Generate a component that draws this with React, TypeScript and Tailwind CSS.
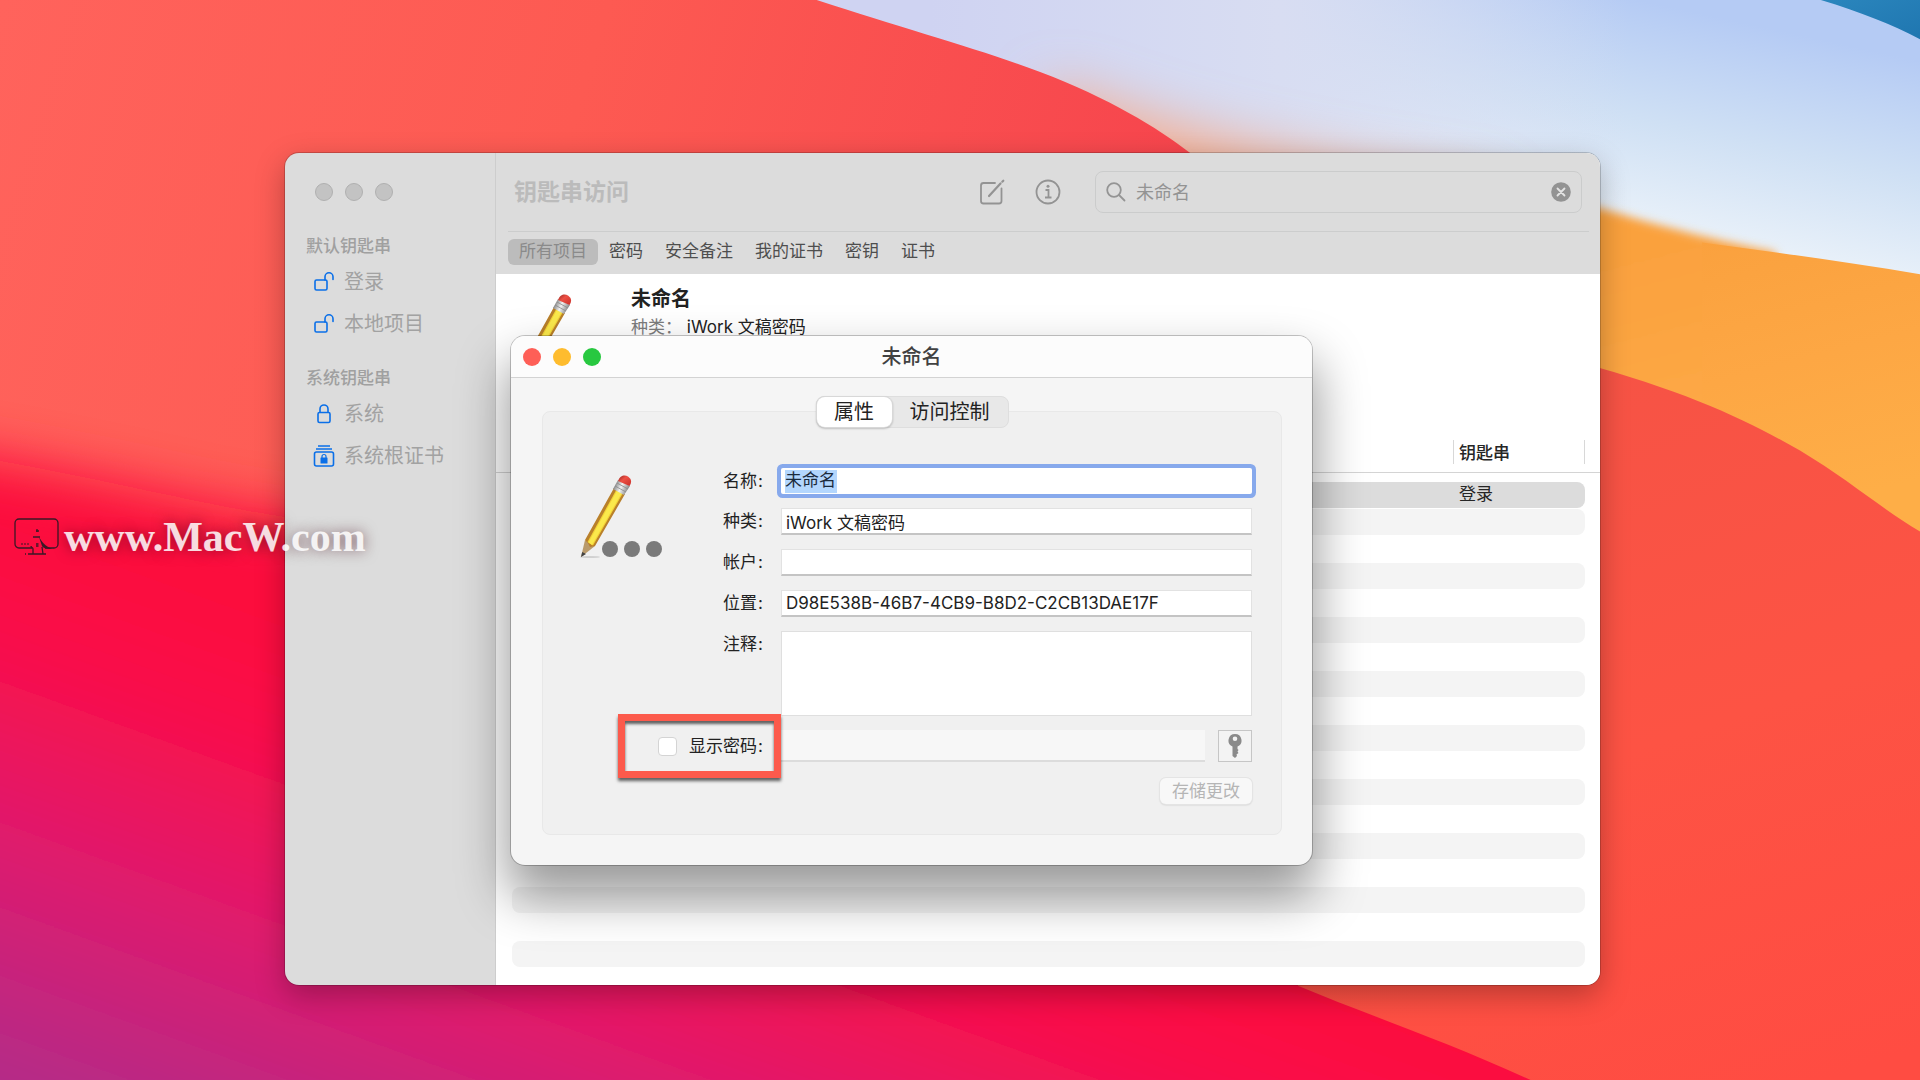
import React from "react";

function Wallpaper() {
  return (
    <svg
      aria-hidden="true"
      className="absolute inset-0 h-full w-full"
      viewBox="0 0 1568 882"
      preserveAspectRatio="none"
    >
      <defs>
        <linearGradient id="sky" gradientUnits="userSpaceOnUse" x1="1430" y1="20" x2="1390" y2="205">
          <stop offset="0" stopColor="#b5cbf4" />
          <stop offset="0.5" stopColor="#cfe0f4" />
          <stop offset="1" stopColor="#ecf3fa" />
        </linearGradient>
        <linearGradient id="lilac" gradientUnits="userSpaceOnUse" x1="760" y1="0" x2="1330" y2="0">
          <stop offset="0" stopColor="#cfd3f2" />
          <stop offset="0.5" stopColor="#d8ddf2" />
          <stop offset="1" stopColor="#d8ddf2" stopOpacity="0" />
        </linearGradient>
        <linearGradient id="orange" gradientUnits="userSpaceOnUse" x1="1400" y1="190" x2="1460" y2="420">
          <stop offset="0" stopColor="#faa13e" />
          <stop offset="0.5" stopColor="#fda744" />
          <stop offset="1" stopColor="#feae47" />
        </linearGradient>
        <linearGradient id="coral" x1="0" y1="0" x2="1" y2="0.25">
          <stop offset="0" stopColor="#ff635c" />
          <stop offset="0.45" stopColor="#fd5a52" />
          <stop offset="1" stopColor="#f5414c" />
        </linearGradient>
        <linearGradient id="right" gradientUnits="userSpaceOnUse" x1="1300" y1="300" x2="1500" y2="880">
          <stop offset="0" stopColor="#f65345" />
          <stop offset="0.5" stopColor="#fd5344" />
          <stop offset="1" stopColor="#ff4c42" />
        </linearGradient>
        <linearGradient id="crimson" gradientUnits="userSpaceOnUse" x1="0" y1="430" x2="-145" y2="830">
          <stop offset="0" stopColor="#fc0c3e" />
          <stop offset="0.2" stopColor="#f90f4a" />
          <stop offset="0.55" stopColor="#e01a6c" />
          <stop offset="1" stopColor="#b32c88" />
        </linearGradient>
        <linearGradient id="corner" x1="0" y1="0" x2="1" y2="1">
          <stop offset="0" stopColor="#2b86bd" />
          <stop offset="1" stopColor="#1f76b0" />
        </linearGradient>
        <filter id="soft" filterUnits="userSpaceOnUse" x="-400" y="-200" width="2400" height="1500">
          <feGaussianBlur stdDeviation="22" />
        </filter>
        <filter id="mid" filterUnits="userSpaceOnUse" x="1100" y="100" width="700" height="500">
          <feGaussianBlur stdDeviation="4" />
        </filter>
        <clipPath id="coralClip">
          <path d="M-60 -60H560L667 0C740 24 800 40 850 59C905 80 945 104 972 125L1040 170V960H-60Z" />
        </clipPath>
      </defs>
      <rect width="1568" height="882" fill="url(#sky)" />
      <rect width="1568" height="200" fill="url(#lilac)" />
      <path d="M860 70C940 100 1030 130 1220 155V220H800Z" fill="#f7ab8a" filter="url(#soft)" />
      <path d="M1487 0C1520 10 1545 20 1568 32V0Z" fill="url(#corner)" />
      <path d="M1200 145L1307 170C1340 180 1390 194 1450 206V420H1200Z" fill="url(#orange)" filter="url(#mid)" />
      <path d="M1390 198C1450 206 1510 214 1568 224V480H1390Z" fill="url(#orange)" />
      <g clipPath="url(#coralClip)">
        <rect width="1040" height="882" fill="url(#coral)" />
      </g>
      <path
        d="M-200 350C40 370 160 420 300 430H1400V1100H-200Z"
        fill="url(#crimson)"
        filter="url(#soft)"
      />
      <path
        d="M1290 296C1380 320 1430 345 1470 368C1510 392 1540 418 1568 434V882H1250C1180 850 1120 830 1060 805V600H1290Z"
        fill="url(#right)"
      />
    </svg>
  );
}

function Pencil({ className }: { className: string }) {
  return (
    <svg aria-hidden="true" className={className} viewBox="0 0 54 84">
      <defs>
        <linearGradient id="ferrule" x1="0" y1="0.2" x2="1" y2="0.6">
          <stop offset="0" stopColor="#5f5f5f" />
          <stop offset="0.5" stopColor="#f2f2f2" />
          <stop offset="1" stopColor="#777" />
        </linearGradient>
        <linearGradient id="eraser" x1="0" y1="0" x2="1" y2="1">
          <stop offset="0" stopColor="#8f2420" />
          <stop offset="0.4" stopColor="#ee5044" />
          <stop offset="1" stopColor="#c8302a" />
        </linearGradient>
      </defs>
      <ellipse cx="10" cy="82" rx="10" ry="1" fill="#0002" />
      <path d="M1 82L5 65L15 71Z" fill="#b99a6b" />
      <path d="M1 82L2.200 77L6 79Z" fill="#444" />
      <path d="M5 65L34 13L45 19L15 71L10 72L8 68Z" fill="#b9802a" />
      <path d="M7.500 67L36.500 14.500L43 18L13 70.500Z" fill="#f3d236" />
      <path d="M8.500 67.500L37.500 15L42 17.500L12 70Z" fill="#fbe94c" />
      <path d="M33 14L38 5L50 11L44 20Z" fill="url(#ferrule)" />
      <path d="M35 11L46 17M37 8L48 14" stroke="#8a8a8a" strokeWidth="0.8" />
      <path d="M38 6C40 0 45 -0.500 48 1.500C51.500 4 52 7 49.500 11Z" fill="url(#eraser)" />
    </svg>
  );
}

function UnlockIcon() {
  return (
    <svg aria-hidden="true" className="h-5 w-5" viewBox="0 0 20 20" fill="none" stroke="#0a6fe8" strokeWidth="1.6">
      <rect x="1" y="8" width="12" height="10" rx="1.500" />
      <path d="M11 8V4.800a4 4 0 0 1 8 0V7.500" strokeLinecap="round" />
    </svg>
  );
}

function LockIcon() {
  return (
    <svg aria-hidden="true" className="h-5 w-5" viewBox="0 0 20 20" fill="none" stroke="#0a6fe8" strokeWidth="1.6">
      <rect x="4" y="8.500" width="12" height="10" rx="1.500" />
      <path d="M6 8.500V5a4 4 0 0 1 8 0V8.500" />
    </svg>
  );
}

function RootCertIcon() {
  return (
    <svg aria-hidden="true" className="h-6 w-5 overflow-visible" viewBox="0 0 20 24" fill="none" stroke="#0a6fe8" strokeWidth="1.6">
      <path d="M4 2H16M2 5H18" strokeWidth="1.3" />
      <rect x="0.500" y="8" width="19" height="14" rx="2" />
      <rect x="6.500" y="13.500" width="7" height="6" fill="#0a6fe8" stroke="none" rx="0.500" />
      <path d="M8 14v-1.500a2 2 0 0 1 4 0v1.500" strokeWidth="1.200" />
    </svg>
  );
}

const sections = [
  {
    title: "默认钥匙串",
    items: [
      { label: "登录", icon: <UnlockIcon /> },
      { label: "本地项目", icon: <UnlockIcon /> },
    ],
  },
  {
    title: "系统钥匙串",
    items: [
      { label: "系统", icon: <LockIcon /> },
      { label: "系统根证书", icon: <RootCertIcon /> },
    ],
  },
];

function Sidebar() {
  return (
    <aside className="w-[211px] shrink-0 border-r border-[#cdcdcd] pt-[30px] pl-[21px]">
      <div className="flex gap-3 pl-[9px]">
        {[0, 1, 2].map((n) => (
          <span key={n} className="size-[18px] rounded-full border border-[#b0b0b0] bg-[#c3c3c3]" />
        ))}
      </div>
      <nav className="mt-[33px] flex flex-col gap-[21px]">
        {sections.map((s) => (
          <section key={s.title}>
            <h2 className="mb-[3px] text-[17px] leading-6 font-medium text-[#a0a0a0]">{s.title}</h2>
            <ul>
              {s.items.map((i) => (
                <li key={i.label}>
                  <button className="flex h-[42px] items-center gap-2 pl-1.5 text-[20px] text-[#a2a2a2]">
                    <span className="flex w-6 justify-center">{i.icon}</span>
                    {i.label}
                  </button>
                </li>
              ))}
            </ul>
          </section>
        ))}
      </nav>
    </aside>
  );
}

function Toolbar() {
  return (
    <header className="bg-[#dcdcdc] pr-[11px] pl-3">
      <div className="flex h-[79px] items-center border-b border-[#cccdcd] pr-[7px] pl-1.5">
        <h1 className="text-[23px] font-bold text-[#bbbbbb]">钥匙串访问</h1>
        <div className="ml-auto flex items-center">
          <button aria-label="新建" className="mr-[30px]">
            <svg className="size-[26px]" viewBox="0 0 26 26" fill="none" stroke="#939393" strokeWidth="1.800">
              <path d="M16 4H4.500A2.500 2.500 0 0 0 2 6.500V22A2.500 2.500 0 0 0 4.500 24.500H20A2.500 2.500 0 0 0 22.500 22V9.500" strokeLinecap="round" />
              <path d="M10 17L21.500 4.500M23.300 2.700L24.300 1.700" strokeWidth="2.200" strokeLinecap="round" />
            </svg>
          </button>
          <button aria-label="简介" className="mr-[34px]">
            <svg className="size-[26px]" viewBox="0 0 26 26" fill="none" stroke="#939393" strokeWidth="1.800">
              <circle cx="13" cy="13" r="11.500" />
              <path d="M10.500 11H13.500V18M10 18.500H16.500" />
              <circle cx="13" cy="7.300" r="1.500" fill="#939393" stroke="none" />
            </svg>
          </button>
          <label className="flex h-[42px] w-[487px] items-center rounded-lg border border-[#cbcccc] px-2.5">
            <svg aria-hidden="true" className="size-5" viewBox="0 0 20 20" fill="none" stroke="#949494" strokeWidth="1.800" strokeLinecap="round">
              <circle cx="8" cy="8" r="6.800" />
              <path d="M13 13L18.500 18.500" />
            </svg>
            <input aria-label="搜索" defaultValue="未命名" className="ml-2.5 min-w-0 flex-1 bg-transparent text-[18px] text-[#939393] outline-none" />
            <button aria-label="清除">
              <svg className="size-5" viewBox="0 0 20 20">
                <circle cx="10" cy="10" r="9.800" fill="#939393" />
                <path d="M6.500 6.500L13.500 13.500M13.500 6.500L6.500 13.500" stroke="#e4e4e4" strokeWidth="1.800" strokeLinecap="round" />
              </svg>
            </button>
          </label>
        </div>
      </div>
      <div className="flex h-[42px] items-start pt-[7px] text-[17px] leading-[24px] text-[#4e4e4e]">
        {["所有项目", "密码", "安全备注", "我的证书", "密钥", "证书"].map((t, n) => (
          <button
            key={t}
            className={n === 0 ? "rounded-md bg-[#bcbcbc] px-[11px] pb-0.5 text-[#8a8a8a]" : "px-[11px] pb-0.5"}
          >
            {t}
          </button>
        ))}
      </div>
    </header>
  );
}

function ItemTable() {
  const rows = Array.from({ length: 18 }, (_, n) => n);
  return (
    <table className="w-full border-separate border-spacing-0 text-left text-[17px] text-[#262626]">
      <thead>
        <tr className="h-[33px] align-top">
          <th aria-label="名称" className="w-4 border-b border-[#d4d4d4] p-0" />
          <th aria-label="种类" className="border-b border-[#d4d4d4] p-0">
            <span className="block h-6 border-l border-[#d8d8d8]" />
          </th>
          <th className="w-[132px] border-b border-[#d4d4d4] p-0 font-medium">
            <span className="block h-6 border-x border-[#d8d8d8] pl-[5px] leading-[26px]">钥匙串</span>
          </th>
          <th aria-label="滚动条" className="w-[15px] border-b border-[#d4d4d4] p-0" />
        </tr>
      </thead>
      <tbody>
        <tr className="h-2">
          <td />
        </tr>
        {rows.map((n) => {
          const fill = n === 0 ? "bg-[#dcdcdc]" : n % 2 === 1 ? "bg-[#f4f4f4]" : "";
          return (
            <tr key={n} className="h-[27px]">
              <td />
              <td className="p-0">
                <div className={`h-[26px] rounded-l-lg ${fill}`} />
              </td>
              <td className="p-0">
                <div className={`h-[26px] rounded-r-lg pl-1.5 leading-6 ${fill}`}>{n === 0 ? "登录" : ""}</div>
              </td>
              <td />
            </tr>
          );
        })}
      </tbody>
    </table>
  );
}

function Label({ htmlFor, children }: { htmlFor: string; children: React.ReactNode }) {
  return (
    <label htmlFor={htmlFor} className="text-right leading-[26px]">
      {children}
      <span className="pl-px">:</span>
    </label>
  );
}

const fieldClass =
  "h-[27px] w-full border border-b-2 border-[#e2e2e2] border-b-[#c4c4c4] bg-white px-1 text-[17px] text-[#222] outline-none";

function InfoDialog() {
  return (
    <div
      role="dialog"
      aria-label="未命名"
      className="absolute top-[183px] right-[288px] left-[226px] rounded-[14px] bg-[#f5f5f5] pb-[30px] text-[17px] text-[#222] shadow-[0_0_0_1px_rgba(0,0,0,0.22),0_28px_50px_4px_rgba(0,0,0,0.4)]"
    >
      <div className="grid h-[42px] grid-cols-3 items-center rounded-t-[14px] border-b border-[#d3d3d3] bg-[#fcfcfc] px-3">
        <div className="flex gap-3">
          <button aria-label="关闭" className="size-[18px] rounded-full bg-[#fe5f57]" />
          <button aria-label="最小化" className="size-[18px] rounded-full bg-[#febc2e]" />
          <button aria-label="缩放" className="size-[18px] rounded-full bg-[#28c840]" />
        </div>
        <h2 className="text-center text-[20px] leading-6 font-medium text-[#414141]">未命名</h2>
      </div>
      <div className="mt-[33px] mr-[30px] ml-[31px] rounded-lg border border-[#e8e8e8] bg-[#f0f0f0] pr-[29px] pb-[30px]">
        <div role="tablist" className="relative -mt-4 mr-[-29px] flex justify-center text-[20px] leading-[30px]">
          <div className="flex rounded-lg border border-[#dedede] bg-[#e8e8e8]">
            <button role="tab" aria-selected="true" className="w-[75px] rounded-lg bg-white shadow-[0_0_0_1px_#d8d8d8,0_1px_2px_1px_rgba(0,0,0,0.2)]">
              属性
            </button>
            <button role="tab" aria-selected="false" className="px-[18px]">
              访问控制
            </button>
          </div>
        </div>
        <div className="mt-10 grid grid-cols-[220px_1fr] gap-x-[18px] gap-y-3.5">
          <Label htmlFor="name">名称</Label>
          <div className="flex h-[26px] items-center rounded-xs bg-white px-1 ring-4 ring-[#87a9ec]">
            <input
              id="name"
              defaultValue="未命名"
              className="h-[25px] w-[52px] bg-[#b3d6fd] bg-clip-content py-px text-[17px] text-[#1b2a3c] outline-none"
            />
          </div>
          <Label htmlFor="kind">种类</Label>
          <input id="kind" defaultValue="iWork 文稿密码" className={fieldClass} />
          <Label htmlFor="account">帐户</Label>
          <input id="account" className={fieldClass} />
          <Label htmlFor="where">位置</Label>
          <input id="where" defaultValue="D98E538B-46B7-4CB9-B8D2-C2CB13DAE17F" className={fieldClass} />
          <Label htmlFor="comments">注释</Label>
          <textarea id="comments" className="block h-[85px] w-full resize-none border border-[#dfdfdf] bg-white outline-none" />
          <div className="relative flex items-center justify-end">
            <div className="pointer-events-none absolute -top-4 -right-[18px] h-16 w-[163px] border-[7px] border-[#fc5a4c] shadow-[0_3px_3px_rgba(0,0,0,0.6),inset_0_3px_3px_rgba(0,0,0,0.6)]" />
            <input id="show" type="checkbox" className="mr-3 size-[19px] appearance-none rounded-sm border border-[#d4d4d4] bg-white" />
            <Label htmlFor="show">显示密码</Label>
          </div>
          <div className="flex gap-[13px]">
            <input aria-label="密码" disabled className="h-8 min-w-0 flex-1 border-b-2 border-[#dcdcdc] bg-[#f7f7f7]" />
            <button aria-label="密码助理" className="flex h-8 w-[34px] items-center justify-center border border-[#c6c6c6] bg-[#f3f3f3]">
              <svg className="h-6 w-3.5" viewBox="0 0 14 24" fill="#8a8a8a">
                <path fillRule="evenodd" d="M7 0a6.500 6.500 0 0 0-2.500 12.500V22L7 24L9 22L8.500 20.500L10.500 19L9.500 17.500L10.500 16L9.500 15V12.500A6.500 6.500 0 0 0 7 0ZM7 2.500A2.300 2.300 0 1 1 7 7.100A2.300 2.300 0 1 1 7 2.500Z" />
              </svg>
            </button>
          </div>
        </div>
        <div className="mt-4 flex justify-end">
          <button disabled className="h-[26px] w-[92px] rounded-md bg-[#f8f8f8] text-[17px] leading-[26px] text-[#b5b5b5] shadow-[0_0_0_1px_#e4e4e4,0_1px_2px_rgba(0,0,0,0.2)]">
            存储更改
          </button>
        </div>
      </div>
      <div className="absolute top-[139px] left-[69px]">
        <Pencil className="h-[84px] w-[54px]" />
        <div className="absolute top-[66px] left-[22px] flex gap-1.5">
          {[0, 1, 2].map((n) => (
            <span key={n} className="size-4 rounded-full bg-[#7a7a7a]" />
          ))}
        </div>
      </div>
    </div>
  );
}

function Watermark() {
  return (
    <div className="pointer-events-none absolute top-[512px] left-[14px] flex items-center gap-1">
      <svg aria-hidden="true" className="h-[38px] w-[46px]" viewBox="0 0 46 38" fill="none" stroke="#3a1826" strokeWidth="1.300">
        <path d="M18 30H5a4 4 0 0 1-4-4V5a4 4 0 0 1 4-4H40a4 4 0 0 1 4 4V26a4 4 0 0 1-4 4H31" />
        <path d="M14 36H32M19 36V31C19 29 17 30 17 28M29 36L28 29M19 19H26" />
        <path d="M25 19C28 24 31 28 38 31C32 31 29 30 28 28Z" fill="#3a1826" stroke="none" />
        <path d="M23 11v3M22 13h3M22 26h2.500M22 28h2.500M11 36h1" />
        <path d="M8 25v2M11 25v2M14 25v2" strokeWidth="1" />
      </svg>
      <span className="font-['Liberation_Serif',serif] text-[42px] leading-[50px] font-bold text-white/85 [text-shadow:0_0_14px_rgba(60,0,20,0.6)]">
        www.MacW.com
      </span>
    </div>
  );
}

export default function App() {
  return (
    <div className="relative flex min-h-screen overflow-hidden bg-[#fb5548] pt-[153px] pr-80 pb-[95px] pl-[285px] font-[Inter,'Noto_Sans_CJK_SC',sans-serif]">
      <Wallpaper />
      <main className="relative flex min-w-0 flex-1 rounded-[14px] bg-[#dcdcdc] shadow-[0_0_0_1px_rgba(0,0,0,0.18),0_10px_30px_rgba(0,0,0,0.28)]">
        <Sidebar />
        <div className="flex min-w-0 flex-1 flex-col overflow-hidden rounded-r-[14px] bg-white">
          <Toolbar />
          <section className="flex h-[166px] pt-3 pl-6">
            <Pencil className="mt-2 h-[84px] w-[54px]" />
            <div className="ml-[57px]">
              <h2 className="text-[20px] leading-[26px] font-bold text-[#222]">未命名</h2>
              <p className="mt-0.5 text-[17px] leading-[26px] text-[#222]">
                <span className="text-[#7c7c7c]">种类：</span> iWork 文稿密码
              </p>
            </div>
          </section>
          <ItemTable />
        </div>
        <InfoDialog />
      </main>
      <Watermark />
    </div>
  );
}
